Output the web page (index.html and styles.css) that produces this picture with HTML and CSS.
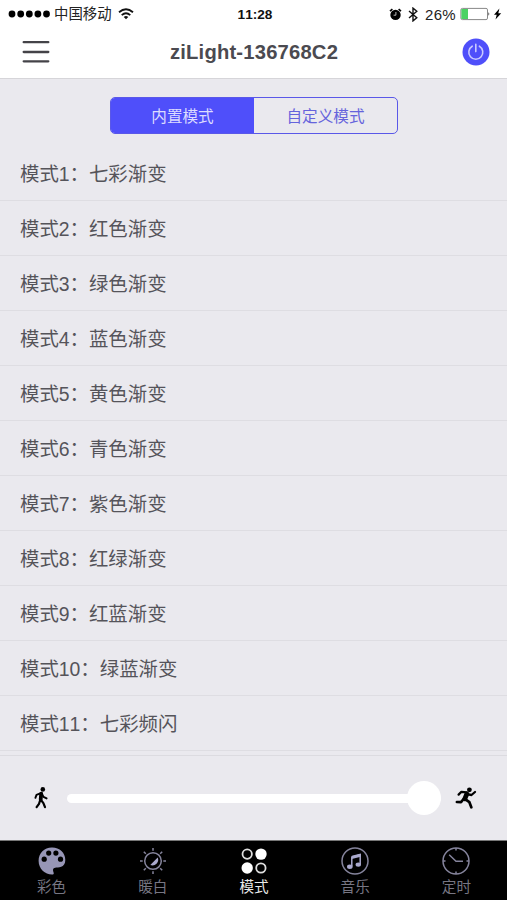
FILE: index.html
```
<!doctype html>
<html lang="zh-CN">
<head>
<meta charset="utf-8">
<meta name="viewport" content="width=device-width, initial-scale=1">
<title>ziLight</title>
<link rel="stylesheet" href="styles.css">
</head>
<body>
<header>
	<div class="status">
		<div class="carrier">
			<svg width="42" height="8" viewBox="0 0 42 8"><circle cx="4" cy="4" r="3.4"/><circle cx="12.7" cy="4" r="3.4"/><circle cx="21.3" cy="4" r="3.4"/><circle cx="29.9" cy="4" r="3.4"/><circle cx="38.5" cy="4" r="3.4"/></svg>
			<span>中国移动</span>
			<svg class="wifi" width="16" height="12" viewBox="0 0 16 12" fill="none" stroke="#111" stroke-width="1.8"><path d="M1 4.3Q8-1.7 15 4.3M3.7 7.1Q8 3.3 12.3 7.1"/><path d="M5.7 8.9Q8 7.3 10.3 8.9L8 11.3z" fill="#111" stroke="none"/></svg>
		</div>
		<b class="clock">11:28</b>
		<div class="battery">
			<svg width="13" height="13" viewBox="0 0 13 13"><circle cx="6.5" cy="6.9" r="5.2"/><path d="M1 3.1L3.4 1.2M12 3.1L9.6 1.2" stroke="#000" stroke-width="1.7"/><path d="M6.9 4V7.2H4.6" fill="none" stroke="#ccc" stroke-width=".9"/></svg>
			<svg class="bt" width="10" height="15" viewBox="0 0 10 15" fill="none" stroke="#111" stroke-width="1.4"><path d="M1 4L8.8 10.7 5 13.9V1.1L8.8 4.2 1 11"/></svg>
			<span>26%</span>
			<svg class="cell" width="42" height="14" viewBox="0 0 42 14"><rect x=".9" y="1.4" width="26.6" height="11.2" rx="1.5" fill="#fff" stroke="#888"/><path d="M1.4 2h6.6v10H1.4z" fill="#4cd263"/><path d="M28.3 5.3q2 1.7 0 3.4z" fill="#555"/><path d="M39.4 1.6L34 7.8h2.7L35.5 12.5 41.2 6.2h-2.9z"/></svg>
		</div>
	</div>
	<div class="bar">
		<svg width="28" height="24" viewBox="0 0 28 24" stroke="#444348" stroke-width="2.3" stroke-linecap="round"><path d="M1.7 2.2h24.6M1.7 12h24.6M1.7 21.3h24.6"/></svg>
		<h1>ziLight-136768C2</h1>
		<svg width="28" height="28" viewBox="0 0 28 28" fill="none" stroke="#c9c9ff" stroke-width="1.6" stroke-linecap="round"><circle cx="14" cy="14" r="13.5" fill="#4f4ffa" stroke="none"/><path d="M10.2 8.2a7 7 0 1 0 7.2 0M13.8 6.2v7.4"/></svg>
	</div>
</header>

<div class="segment">
	<div class="on">内置模式</div>
	<div>自定义模式</div>
</div>

<ul class="modes">
	<li>模式1：七彩渐变</li>
	<li>模式2：红色渐变</li>
	<li>模式3：绿色渐变</li>
	<li>模式4：蓝色渐变</li>
	<li>模式5：黄色渐变</li>
	<li>模式6：青色渐变</li>
	<li>模式7：紫色渐变</li>
	<li>模式8：红绿渐变</li>
	<li>模式9：红蓝渐变</li>
	<li>模式10：绿蓝渐变</li>
	<li>模式11：七彩频闪</li>
</ul>

<div class="speed">
	<svg width="14" height="22" viewBox="0 0 14 22" fill="none" stroke="#000" stroke-linecap="round" stroke-linejoin="round"><circle cx="8.8" cy="2.4" r="2.3" fill="#000" stroke="none"/><path d="M7.2 6.6L6.7 12.4" stroke-width="3.8"/><path d="M6.3 6.3L2.5 7.8 1.4 10.8M8 6.8L9.5 9.8 12.6 11.4" stroke-width="1.9"/><path d="M6.2 13L5 16.8 2.6 20.2M7 13L9.4 16.1 11 20.2" stroke-width="2.2"/></svg>
	<div class="track"><div class="knob"></div></div>
	<svg width="22" height="22" viewBox="0 0 22 22" fill="none" stroke="#000" stroke-linecap="round" stroke-linejoin="round"><circle cx="14.4" cy="2.8" r="2.4" fill="#000" stroke="none"/><path d="M11.8 7L9.8 11.8" stroke-width="4.8"/><path d="M11.8 5.3L6.4 4.8 3.6 7.6M13 7.4L16.5 8 20 5" stroke-width="2.3"/><path d="M8.6 12L6 15.2 1.9 15M10.5 12.4L14.4 15.2 16.3 20.3" stroke-width="2.7"/></svg>
</div>

<nav>
	<div class="tab">
		<svg width="28" height="28" viewBox="0 0 28 28"><path d="M14.3.6C6.6.3.6 6.3.6 13.8.6 21.8 7 27.6 14 27.6c1.7 0 2-.9 1.6-2.2-.9-2.3-.8-4.4 1.6-4.7 2.6-.3 10.1.5 10.1-7.7C27.3 5.7 21.5.8 14.3.6z" fill="#9796b6"/><g fill="#000"><circle cx="6.2" cy="12.2" r="2.6"/><circle cx="10.7" cy="6.1" r="2.6"/><circle cx="17.9" cy="6.1" r="2.6"/><circle cx="22.5" cy="12.2" r="2.6"/></g></svg>
		<span>彩色</span>
	</div>
	<div class="tab">
		<svg width="28" height="28" viewBox="0 0 28 28" fill="none" stroke="#85849c" stroke-width="1.5"><circle cx="14" cy="14" r="8.3"/><path d="M14 1v2.7M14 24.3V27M1 14h2.7M24.3 14H27M4.8 4.8l2 2M21.2 21.2l2 2M4.8 23.2l2-2M21.2 6.8l2-2"/><path d="M18.7 10.5A5.7 5.7 0 0 1 11.3 18z" fill="#aaa9cd" stroke="none"/></svg>
		<span>暖白</span>
	</div>
	<div class="tab active">
		<svg width="28" height="28" viewBox="0 0 28 28" fill="none" stroke="#dedede" stroke-width="1.8"><circle cx="7.2" cy="7.1" r="4.7"/><circle cx="20.9" cy="21" r="4.7"/><g fill="#fff" stroke="none"><circle cx="21" cy="7.1" r="5.7"/><circle cx="7.2" cy="21" r="5.7"/></g></svg>
		<span>模式</span>
	</div>
	<div class="tab">
		<svg width="28" height="28" viewBox="0 0 28 28" fill="none" stroke="#85849c" stroke-width="1.5"><circle cx="14" cy="14" r="13"/><path d="M10.8 19.5V10L19.2 7.8V17.5" stroke="#aaa9cd"/><path d="M10.8 8.8L19.8 6.5v3.2L10.8 12z" fill="#aaa9cd" stroke="none"/><g fill="#aaa9cd" stroke="none"><ellipse cx="8.8" cy="19.7" rx="2.8" ry="2.2"/><ellipse cx="17.3" cy="17.6" rx="2.7" ry="2.2"/></g></svg>
		<span>音乐</span>
	</div>
	<div class="tab">
		<svg width="28" height="28" viewBox="0 0 28 28" fill="none" stroke="#85849c" stroke-width="1.5"><circle cx="14" cy="14" r="13"/><path d="M7.2 7.7L14 14.2h7M14 1v2.5M14 24.5V27M1 14h2.5M24.5 14H27"/></svg>
		<span>定时</span>
	</div>
</nav>
</body>
</html>
```
FILE: styles.css
```
* {
	box-sizing: border-box;
}
body {
	margin: 0;
	height: 900px;
	display: flex;
	flex-direction: column;
	overflow: hidden;
	background: #eae9ee;
	color: #55545a;
	font-family: "Liberation Sans", "Noto Sans CJK SC", sans-serif;
	font-kerning: none;
}
svg {
	display: block;
	flex: none;
}
header {
	height: 79px;
	background: #fff;
	border-bottom: 1px solid #d6d5d9;
}
.status {
	display: grid;
	grid-template-columns: 1fr auto 1fr;
	align-items: center;
	height: 27px;
	padding: 0 5px 0 8px;
	font-size: 14.4px;
	line-height: 27px;
	color: #222;
}
.carrier, .battery {
	display: flex;
	align-items: center;
}
.carrier span {
	margin: 0 6px 0 4px;
	padding-top: 1px;
}
.battery {
	justify-content: flex-end;
}
.battery span {
	margin: 0 4px 0 6px;
	font-size: 15px;
	letter-spacing: .3px;
}
.bt {
	margin: 0 1px 0 6px;
}
.clock {
	padding-top: 1px;
	font-size: 13.6px;
	color: #111;
}
.bar {
	display: flex;
	align-items: center;
	justify-content: space-between;
	height: 50px;
	padding: 0 17px 0 22px;
}
h1 {
	margin: 0;
	padding: 1px 4px 0 0;
	font-size: 20.2px;
	font-weight: bold;
	letter-spacing: .2px;
	color: #4b4a50;
}
.segment {
	display: flex;
	width: 288px;
	height: 37px;
	margin: 18px 0 12px 110px;
	border: 1px solid #5a58e8;
	border-radius: 5px;
	overflow: hidden;
	font-size: 15.6px;
	line-height: 37px;
	text-align: center;
	color: #6563dc;
}
.segment div {
	flex: 1;
}
.segment .on {
	background: #4f4ffa;
	color: #dcdcff;
}
.modes {
	margin: 0;
	padding: 0;
	list-style: none;
	border-bottom: 1px solid #dcdbe0;
	height: 610px;
}
.modes li {
	height: 55px;
	padding: 1px 0 0 20px;
	border-bottom: 1px solid #dedde2;
	font-size: 19.4px;
	line-height: 55px;
}
.speed {
	display: flex;
	align-items: center;
	flex: 1;
	padding: 0 30px 0 34px;
}
.track {
	display: flex;
	align-items: center;
	justify-content: flex-end;
	width: 374px;
	height: 9px;
	margin: 0 14px 0 19px;
	border-radius: 5px;
	background: #fff;
}
.knob {
	flex: none;
	width: 34px;
	height: 34px;
	border-radius: 50%;
	background: #fff;
}
nav {
	display: flex;
	height: 60px;
	padding-left: 1px;
	border-top: 1px solid #777;
	background: #000;
}
.tab {
	flex: 1;
	display: flex;
	flex-direction: column;
	align-items: center;
	padding-top: 6px;
	font-size: 14.6px;
	line-height: 24px;
	color: #777683;
}
.active {
	color: #e8e8e8;
}
```
